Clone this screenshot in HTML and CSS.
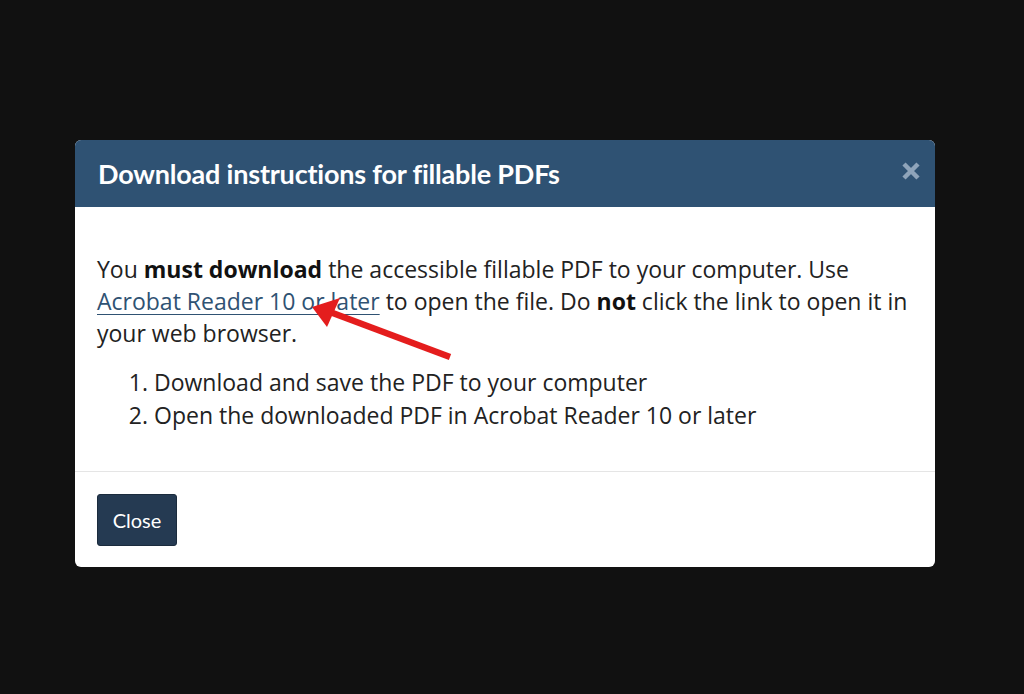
FILE: index.html
```html
<!DOCTYPE html>
<html>
<head>
<meta charset="utf-8">
<link rel="stylesheet" href="styles.css">
</head>
<body>
<div class="backdrop">
  <div class="modal">
    <div class="modal-header">
      <h4 class="modal-title">Download instructions for fillable PDFs</h4>
      <button class="close" aria-label="Close">
        <svg width="20" height="20" viewBox="0 0 20 20"><path d="M3 3 L17 17 M17 3 L3 17" stroke="#8fa4ba" stroke-width="4.5" stroke-linecap="butt"/></svg>
      </button>
    </div>
    <div class="modal-body">
      <p>You <strong>must download</strong> the accessible fillable PDF to your computer. Use <a href="#">Acrobat Reader 10 or later</a> to open the file. Do <strong>not</strong> click the link to open it in your web browser.</p>
      <ol>
        <li>Download and save the PDF to your computer</li>
        <li>Open the downloaded PDF in Acrobat Reader 10 or later</li>
      </ol>
      <svg class="arrow" width="160" height="70" viewBox="0 0 160 70">
        <line x1="150" y1="64" x2="30" y2="19" stroke="#e41d1d" stroke-width="6.5"/>
        <polygon points="12,14 40,5 27,34" fill="#e41d1d"/>
      </svg>
    </div>
    <div class="modal-footer">
      <button class="btn">Close</button>
    </div>
  </div>
</div>
</body>
</html>
```
FILE: styles.css
```css
html, body {
  margin: 0;
  padding: 0;
  background: #111111;
  width: 1024px;
  height: 694px;
  overflow: hidden;
}
.backdrop {
  padding-top: 140px;
  padding-left: 75px;
}
.modal {
  width: 860px;
  background: #ffffff;
  border-radius: 6px;
  overflow: hidden;
}
.modal-header {
  background: #2f5273;
  height: 67px;
  display: flex;
  align-items: center;
  justify-content: space-between;
  padding: 0 14px 0 23px;
  box-sizing: border-box;
}
.modal-title {
  margin: 0;
  font-family: Lato, "Liberation Sans", sans-serif;
  font-weight: 700;
  font-size: 27px;
  color: #ffffff;
  letter-spacing: -0.2px;
}
.close {
  background: none;
  border: 0;
  padding: 0;
  display: flex;
  margin-top: -6px;
}
.modal-body {
  position: relative;
  padding: 46px 22px 39px 22px;
  font-family: "Open Sans", "Noto Sans", sans-serif;
  font-size: 23px;
  line-height: 32px;
  color: #222222;
}
.modal-body p {
  margin: 0 0 17px 0;
}
.modal-body strong {
  font-weight: 700;
  color: #111;
}
.modal-body a {
  color: #2f5273;
  text-decoration: underline;
  text-underline-offset: 4px;
  text-decoration-thickness: 1px;
}
.modal-body ol {
  margin: 0;
  padding-left: 57px;
}
.modal-body li {
  line-height: 33px;
}
.arrow {
  position: absolute;
  left: 225px;
  top: 86px;
}
.modal-footer {
  border-top: 1px solid #e5e5e5;
  padding: 22px 22px 21px 22px;
}
.btn {
  background: #253a52;
  color: #ffffff;
  border: 1px solid #1b2b3d;
  border-radius: 3px;
  font-family: Lato, "Liberation Sans", sans-serif;
  font-size: 20px;
  width: 80px;
  height: 52px;
  padding: 0;
}
```
